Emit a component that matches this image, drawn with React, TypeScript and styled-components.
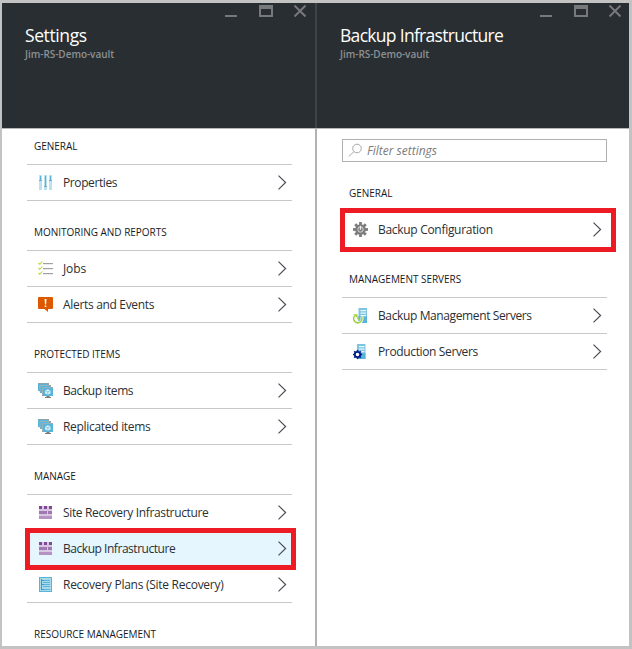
import React from "react";
import styled, { createGlobalStyle, css } from "styled-components";

const GlobalStyle = createGlobalStyle`
  *, *::before, *::after { box-sizing: border-box; }
  body { margin: 0; background: #c3c3c3; }
`;

const Frame = styled.main`
  display: flex;
  width: 632px;
  height: 649px;
  border: solid #c3c3c3;
  border-width: 3px 3px 3px 2px;
  background: #fff;
  overflow: hidden;
  font-family: "Open Sans", "Noto Sans", sans-serif;
  color: #2b2f33;
`;

const Blade = styled.section<{ $width: number }>`
  flex: none;
  width: ${(p) => p.$width}px;
  height: 643px;
`;

const Divider = styled.div`
  flex: none;
  width: 2px;
  height: 643px;
  background: linear-gradient(#3e4347 0 125px, #b2b2b2 125px);
`;

const Header = styled.header`
  height: 126px;
  background: #292e32;
  border-bottom: 1px solid #b5b6b7;
  padding: 2px 0 0 23px;
`;

const Controls = styled.div`
  display: flex;
  height: 12px;
  margin-left: 200px;
`;

const Title = styled.h1<{ $spacing: number }>`
  margin: 5px 0 0;
  font-size: 17.5px;
  line-height: 26px;
  font-weight: 400;
  letter-spacing: ${(p) => p.$spacing}px;
  color: #fff;
  white-space: nowrap;
`;

const Subtitle = styled.p`
  margin: 0;
  font-size: 10px;
  line-height: 13px;
  font-weight: 600;
  letter-spacing: -0.04px;
  color: #8d9093;
`;

const Content = styled.div`
  width: 265px;
  margin-left: 25px;
`;

const Search = styled.div`
  display: flex;
  align-items: center;
  height: 23px;
  margin: 10px 0 0;
  padding-left: 5px;
  border: 1px solid #b0b0b0;
  font-size: 12px;
  font-style: italic;
  color: #7b7b7b;
  svg { margin-right: 4px; }
`;

const Group = styled.div<{ $first?: boolean }>`
  padding-top: ${(p) => (p.$first ? 0 : 13)}px;
`;

const Heading = styled.h2<{ $first?: boolean }>`
  margin: 0;
  height: ${(p) => (p.$first ? 35 : 36)}px;
  padding-left: 7px;
  font-size: 10px;
  line-height: ${(p) => (p.$first ? 35 : 36)}px;
  font-weight: 400;
  letter-spacing: -0.02px;
  color: #15191e;
  white-space: nowrap;
`;

const List = styled.ul`
  list-style: none;
  margin: 0;
  padding: 0;
  border-top: 1px solid #c8c8c8;
`;

const Row = styled.li<{ $selected?: boolean; $outline?: string }>`
  position: relative;
  display: flex;
  align-items: center;
  height: 36px;
  padding: 0 5px 0 11px;
  border-bottom: 1px solid #c8c8c8;
  background: ${(p) => (p.$selected ? "#e5f6fe" : "transparent")};
  ${(p) =>
    p.$outline &&
    css`
      &::after {
        content: "";
        position: absolute;
        inset: ${p.$outline};
        border: 5px solid #ed1c24;
      }
    `}
`;

const Label = styled.span<{ $spacing: number }>`
  flex: 1;
  margin-left: 9px;
  font-size: 12px;
  line-height: 18px;
  letter-spacing: ${(p) => p.$spacing}px;
  white-space: nowrap;
`;

const Glyph = styled.svg`
  display: block;
  flex: none;
`;

const icons: Record<string, React.ReactNode> = {
  properties: (
    <g shapeRendering="crispEdges">
      {[1, 6, 11].map((x, i) => (
        <g key={x}>
          <path fill="#b9e1f0" d={`M${x} 0h3v15h-3z`} />
          <path fill="#59b4d9" d={`M${x + 1} 1h1v${i === 1 ? 10 : 4}h-1z`} />
          <path fill="#8fa3ac" d={`M${x} ${i === 1 ? 11 : 5}h3v1h-3z`} />
        </g>
      ))}
    </g>
  ),
  jobs: (
    <g>
      {[2, 7, 12].map((y) => (
        <g key={y}>
          <path d={`M0.5 ${y}l1.3 1.3l2.6-2.8`} fill="none" stroke="#b8d432" strokeWidth="1.1" />
          <path fill="#a0a1a2" d={`M5 ${y}h10v1.2h-10z`} />
        </g>
      ))}
    </g>
  ),
  alert: (
    <g>
      <path fill="#dd5900" d="M1 0h13q1 0 1 1v10q0 1-1 1h-4v3l-3.500-3H1q-1 0-1-1V1q0-1 1-1z" />
      <path fill="#fff" d="M6.600 2h1.900l-.4 5.500h-1.100zM6.700 8.400h1.600v1.600h-1.600z" />
    </g>
  ),
  items: (
    <g>
      <path fill="#a0a1a2" d="M0 0h11v8H0zM2 2h11v8H2zM4 4h11v9H4z" />
      <path fill="#59b4d9" d="M0 .7h10v7H0zM2.300 2.900h10v7h-10zM5 5h10v8H5z" />
      <path fill="none" stroke="#a5b5bc" strokeWidth=".8" d="M2 9V2.500h9M4.600 12V4.600H14" />
      <path fill="#d9f0f8" d="M9.800 6.200l2.700 1.300v3l-2.700 1.300l-2.700-1.300v-3z" />
      <path fill="none" stroke="#59b4d9" strokeWidth=".6" d="M7.200 7.600l2.600 1.300l2.600-1.300M9.800 8.900v2.800" />
      <path fill="#7a7a7a" d="M8.500 13h3v1h1.500v1H7v-1h1.500z" />
    </g>
  ),
  infrastructure: (
    <g shapeRendering="crispEdges">
      <path fill="#d9c7e2" d="M1 1h13v13H1z" />
      <path fill="#804998" d="M1 1h3v3H1zM6 1h3v3H6zM11 1h3v3h-3z" />
      <path fill="#a079b4" d="M1 6h8v3H1zM10 6h4v3h-4z" />
      <path fill="#b591c4" d="M1 11h13v3H1z" />
    </g>
  ),
  plans: (
    <g shapeRendering="crispEdges">
      <path fill="#59b4d9" d="M1 0h13v15H1z" />
      <path fill="#a9daec" d="M2 1h11v13H2z" />
      <path fill="#3999c6" d="M3 2h1v11H3zM4 3h2v1H4zM4 7h2v1H4zM4 12h2v1H4z" />
      <path fill="#59b4d9" d="M6 3h6v1H6zM5 5h7v1H5zM6 7h6v1H6zM5 9h7v1H5zM6 12h6v1H6z" />
    </g>
  ),
  gear: (
    <g>
      <g fill="#7d7d7d" transform="translate(7.500 7.500)">
        {[0, 45, 90, 135].map((a) => (
          <path key={a} d="M-1.400-7.500h2.800v15h-2.800z" transform={`rotate(${a})`} />
        ))}
        <circle r="5.300" />
      </g>
      <circle cx="7.500" cy="7.500" r="2.700" fill="#858585" stroke="#d5d5d5" strokeWidth="1" />
      <path fill="#eee" d="M6.900 3.800h1.200v3.800H6.900z" />
    </g>
  ),
  backupServer: (
    <g>
      <path fill="#7cc4e0" d="M5.500 0H14v15H5.500z" />
      <path fill="#59b4d9" d="M5.500 8H14v7H5.500z" />
      <path fill="#e9f6fb" d="M7.500 2H13v1.300H7.500zM7.500 4.500H13v1.300H7.500zM7.500 7H13v1.300H7.500z" />
      <path fill="none" stroke="#fff" strokeWidth="3" d="M2 7.500a4.200 4.200 0 1 0 6.600 1.200" />
      <path fill="none" stroke="#a6cf38" strokeWidth="1.500" d="M1.700 7.900a4.100 4.100 0 1 0 6.800 1" />
      <path fill="#a6cf38" d="M0 6.300h4.500v4z" />
      <path fill="none" stroke="#a6cf38" d="M4.800 8.800v2.500h2.200" />
    </g>
  ),
  productionServer: (
    <g>
      <path fill="#7cc4e0" d="M4 0h8.500v15H4z" />
      <path fill="#59b4d9" d="M4 9h8.500v6H4z" />
      <path fill="#e9f6fb" d="M6 2h5.500v1.300H6zM6 4.500h5.500v1.300H6zM6 7h5.500v1.300H6z" />
      <circle cx="4.500" cy="10.500" r="2.700" fill="#fff" stroke="#001e8a" strokeWidth="1.800" />
      <g fill="#001e8a" transform="translate(4.500 10.500)">
        {[0, 45, 90, 135, 180, 225, 270, 315].map((a) => (
          <path key={a} d="M-.8-4.600h1.600v1.700h-1.600z" transform={`rotate(${a})`} />
        ))}
      </g>
    </g>
  ),
};

const WindowControls = () => (
  <Controls>
    <Glyph width="81" height="12" viewBox="0 0 81 12">
      <path fill="#77797c" d="M0 10h12v2H0z" />
      <path fill="#77797c" fillRule="evenodd" d="M34 0h14v12H34zM36 4v6h10V4z" />
      <path fill="none" stroke="#77797c" strokeWidth="2" d="M69.500 .5l11 11M80.500 .5l-11 11" />
    </Glyph>
  </Controls>
);

interface Item {
  icon: string;
  text: string;
  spacing: number;
  selected?: boolean;
  outline?: string;
}
interface Section {
  title: string;
  items: Item[];
}

const settings: Section[] = [
  { title: "GENERAL", items: [{ icon: "properties", text: "Properties", spacing: -0.4 }] },
  {
    title: "MONITORING AND REPORTS",
    items: [
      { icon: "jobs", text: "Jobs", spacing: -0.1 },
      { icon: "alert", text: "Alerts and Events", spacing: -0.32 },
    ],
  },
  {
    title: "PROTECTED ITEMS",
    items: [
      { icon: "items", text: "Backup items", spacing: -0.42 },
      { icon: "items", text: "Replicated items", spacing: -0.3 },
    ],
  },
  {
    title: "MANAGE",
    items: [
      { icon: "infrastructure", text: "Site Recovery Infrastructure", spacing: -0.35 },
      {
        icon: "infrastructure",
        text: "Backup Infrastructure",
        spacing: -0.46,
        selected: true,
        outline: "-3px -4px -4px -2px",
      },
      { icon: "plans", text: "Recovery Plans (Site Recovery)", spacing: -0.27 },
    ],
  },
  { title: "RESOURCE MANAGEMENT", items: [] },
];

const infrastructure: Section[] = [
  {
    title: "GENERAL",
    items: [
      { icon: "gear", text: "Backup Configuration", spacing: -0.3, outline: "-4px -9px -5px -2px" },
    ],
  },
  {
    title: "MANAGEMENT SERVERS",
    items: [
      { icon: "backupServer", text: "Backup Management Servers", spacing: -0.38 },
      { icon: "productionServer", text: "Production Servers", spacing: -0.36 },
    ],
  },
];

const Sections = ({ data, flush }: { data: Section[]; flush?: boolean }) => (
  <>
    {data.map((s, i) => (
      <Group key={s.title} $first={flush && i === 0}>
        <Heading $first={flush && i === 0}>{s.title}</Heading>
        <List>
          {s.items.map((it) => (
            <Row key={it.text} $selected={it.selected} $outline={it.outline}>
              <Glyph width="16" height="16" viewBox="0 0 16 16">{icons[it.icon]}</Glyph>
              <Label $spacing={it.spacing}>{it.text}</Label>
              <Glyph width="9" height="16" viewBox="0 0 9 16">
                <path d="M.5 .6L7.600 7.500L.5 14.400" fill="none" stroke="#4a4e54" strokeWidth="1.200" />
              </Glyph>
            </Row>
          ))}
        </List>
      </Group>
    ))}
  </>
);

export default function App() {
  return (
    <>
      <GlobalStyle />
      <Frame>
        <Blade $width={313}>
          <Header>
            <WindowControls />
            <Title $spacing={-0.4}>Settings</Title>
            <Subtitle>Jim-RS-Demo-vault</Subtitle>
          </Header>
          <Content>
            <Sections data={settings} flush />
          </Content>
        </Blade>
        <Divider />
        <Blade $width={312}>
          <Header>
            <WindowControls />
            <Title $spacing={-0.7}>Backup Infrastructure</Title>
            <Subtitle>Jim-RS-Demo-vault</Subtitle>
          </Header>
          <Content>
            <Search>
              <Glyph width="15" height="15" viewBox="0 0 15 15">
                <circle cx="9" cy="5.500" r="4.300" fill="none" stroke="#a8a8a8" />
                <path d="M6 8.600L.8 13.500" stroke="#a8a8a8" />
              </Glyph>
              Filter settings
            </Search>
            <Sections data={infrastructure} />
          </Content>
        </Blade>
      </Frame>
    </>
  );
}
